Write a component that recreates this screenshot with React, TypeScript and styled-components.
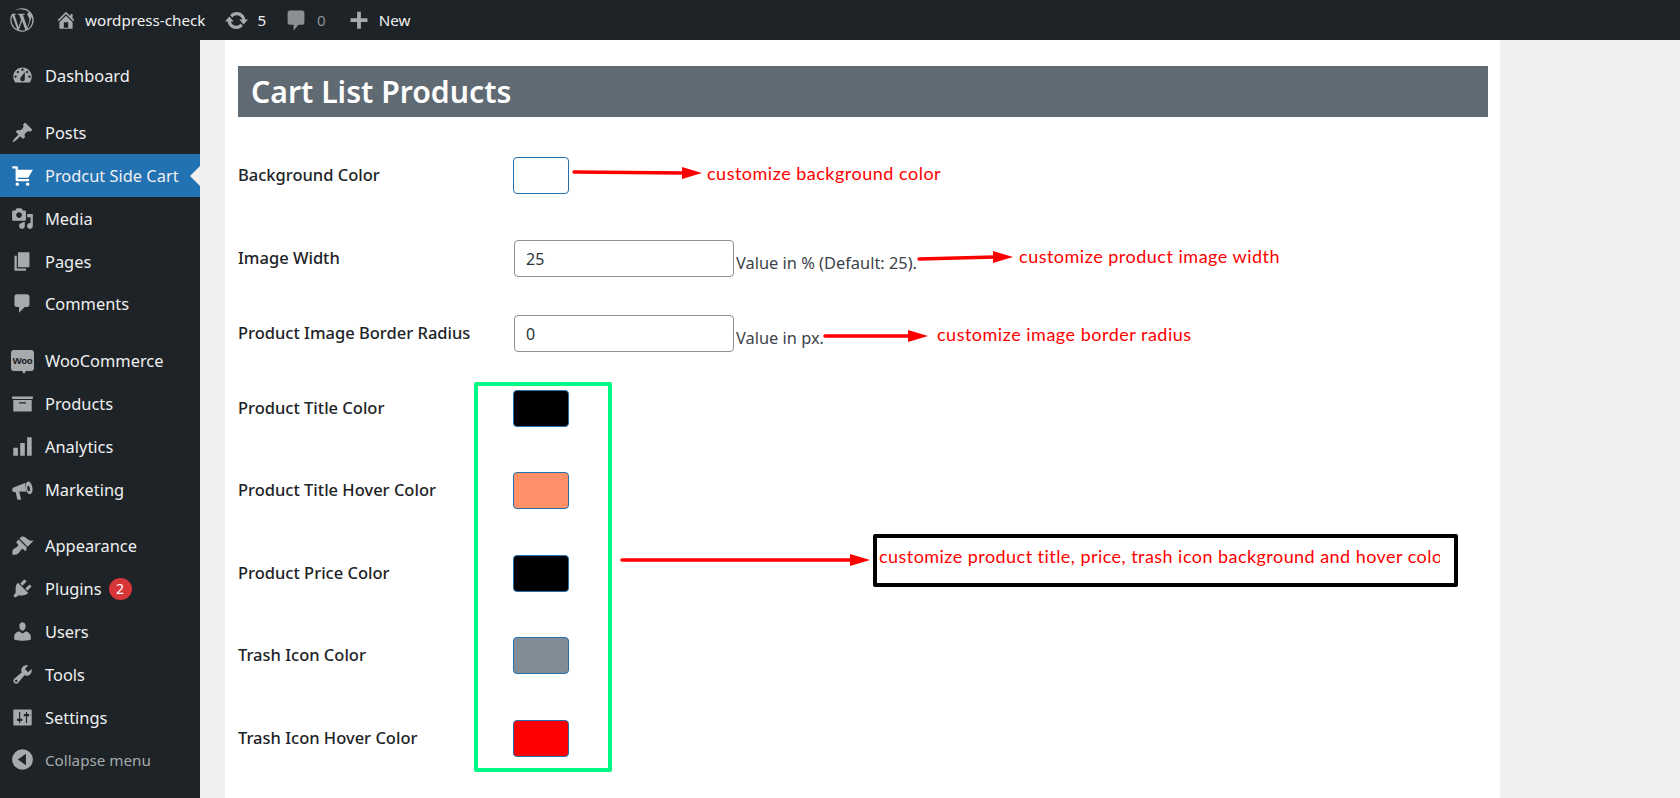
import React from "react";
import styled, { createGlobalStyle } from "styled-components";

const FONT = `"Noto Sans", "Open Sans", "Liberation Sans", sans-serif`;
const NOTE_FONT = `Lato, "Open Sans", sans-serif`;

const Global = createGlobalStyle`
  html, body { margin: 0; padding: 0; height: 100%; background: #f0f0f1; overflow: hidden; }
  #root { height: 100%; }
  * { box-sizing: border-box; }
`;

const Page = styled.div`
  width: 1680px; height: 798px; display: flex; flex-direction: column; position: relative; overflow: hidden;
  font-family: ${FONT}; background: #f0f0f1;
`;
const TopBar = styled.header`
  height: 40px; flex: none; background: #1d2327; display: flex; align-items: center; color: #f0f0f1; font-size: 15.2px;
`;
const TopItem = styled.div<{ $ml: number; $gap: number; $dim?: boolean }>`
  display: flex; align-items: center; margin-left: ${p => p.$ml}px; gap: ${p => p.$gap}px;
  color: ${p => (p.$dim ? "#8c8f94" : "#f0f0f1")};
`;
const Body = styled.div`flex: 1; display: flex; min-height: 0;`;
const Sidebar = styled.nav`
  width: 200px; flex: none; background: #1d2327; padding-top: 14.6px; display: flex; flex-direction: column; gap: 14px;
`;
const Group = styled.div`display: flex; flex-direction: column;`;
const Item = styled.div<{ $active?: boolean; $muted?: boolean }>`
  height: 42.8px; display: flex; align-items: center; padding-left: 11px; position: relative;
  background: ${p => (p.$active ? "#2271b1" : "transparent")};
  color: ${p => (p.$muted ? "#a7aaad" : "#f0f0f1")};
  font-size: ${p => (p.$muted ? "15.2px" : "16.4px")};
  ${p => p.$active && `&::after { content: ""; position: absolute; right: 0; top: 50%; margin-top: -10px;
    border: 10px solid transparent; border-left-width: 0; border-right-color: #f0f0f1; }`}
`;
const IconSlot = styled.span`width: 23px; height: 23px; display: flex; align-items: center; justify-content: center; margin-right: 11px; flex: none;`;
const WooMark = styled.span`
  width: 24px; height: 21px; border-radius: 3px; background: #a7aaad; color: #1d2327; font-size: 9.5px; font-weight: 700;
  display: flex; align-items: center; justify-content: center; position: relative; letter-spacing: -0.3px;
  &::after { content: ""; position: absolute; bottom: -3px; left: 11px; border: 2px solid transparent; border-top-color: #a7aaad; border-bottom-width: 0; border-top-width: 3px; }
`;
const Badge = styled.span`
  width: 23px; height: 22px; border-radius: 50%; background: #d63638; color: #fff; font-size: 14px; margin-left: 7px;
  display: flex; align-items: center; justify-content: center;
`;
const Main = styled.main`flex: 1; min-width: 0; padding-left: 25px;`;
const Panel = styled.section`width: 1275px; height: 100%; background: #fff; padding: 26px 12px 0 13px;`;
const Heading = styled.h1`
  margin: 0 0 40px; height: 51px; background: #5f6a73; color: #fff; font-size: 30.2px; font-weight: 600; line-height: 52px; padding-left: 13px;
`;
const Row = styled.div<{ $h: number }>`display: flex; align-items: flex-start; height: ${p => p.$h}px;`;
const Label = styled.label`
  width: 275px; flex: none; font-size: 16.5px; font-weight: 500; color: #1d2327; line-height: 36px;
`;
const Swatch = styled.div<{ $c: string }>`
  width: 56px; height: 37px; border: 1px solid #2271b1; border-radius: 4px; background: ${p => p.$c}; flex: none;
`;
const TextBox = styled.div`
  width: 220px; height: 37px; margin-left: 1px; border: 1px solid #8c8f94; border-radius: 4px; background: #fff; flex: none;
  padding-left: 11px; display: flex; align-items: center; font-size: 16px; color: #2c3338;
`;
const Help = styled.span`
  margin: 11px 0 0 2px; line-height: 24px; font-size: 16.4px; color: #3c434a; white-space: nowrap;
`;
const ArrowSvg = styled.svg<{ $t: number; $l: number }>`flex: none; margin: ${p => p.$t}px 0 0 ${p => p.$l}px; display: block;`;
const Note = styled.span<{ $t: number; $l: number }>`
  margin: ${p => p.$t}px 0 0 ${p => p.$l}px; font-family: ${NOTE_FONT}; color: #f00; font-size: 18px; line-height: 24px; white-space: nowrap; letter-spacing: 0.5px;
`;
const GreenBox = styled.div`
  position: absolute; left: 474px; top: 382px; width: 138px; height: 390px; border: 4px solid #00f985; border-radius: 2px;
`;
const BlackBox = styled.div`
  position: absolute; left: 873px; top: 534px; width: 585px; height: 53px; border: 4px solid #000; border-radius: 2px;
  padding: 6px 14px 0 2px; overflow: hidden;
`;
const BoxText = styled.div`
  overflow: hidden; white-space: nowrap; font-family: ${NOTE_FONT}; color: #f00; font-size: 18px; line-height: 24px; letter-spacing: 0.45px;
`;
const BigArrow = styled.svg`position: absolute; left: 620px; top: 552px; display: block;`;

const P = ({ d, s = 23, c = "#a7aaad" }: { d: string; s?: number; c?: string }) => (
  <svg width={s} height={s} viewBox="0 0 20 20" fill={c}><path fillRule="evenodd" d={d} /></svg>
);

const icons = {
  home: "M16 8.5l1.53 1.53-1.06 1.06L10 4.62l-6.47 6.47-1.06-1.06L10 2.5l4 4v-2h2v4zm-6-2.46l6 5.99V18H4v-5.97zM12 17v-5H8v5h4z",
  update: "M10.2 3.28c3.53 0 6.43 2.61 6.92 6h2.08l-3.5 4-3.5-4h2.32c-.45-1.97-2.21-3.45-4.32-3.45-1.45 0-2.73.71-3.54 1.78L4.95 5.66C6.23 4.2 8.11 3.28 10.2 3.28zm-.4 13.44c-3.52 0-6.43-2.61-6.92-6H.8l3.5-4c1.17 1.33 2.33 2.67 3.5 4H5.48c.45 1.97 2.21 3.45 4.32 3.45 1.45 0 2.73-.71 3.54-1.78l1.71 1.95c-1.28 1.46-3.15 2.38-5.25 2.38z",
  comment: "M5 2h10c1.1 0 2 .9 2 2v8c0 1.1-.9 2-2 2h-3l-4 5v-5H5c-1.1 0-2-.9-2-2V4c0-1.1.9-2 2-2z",
  plus: "M8.3 2.5h3.4v6h6v3.4h-6v6H8.3v-6h-6V8.5h6z",
  wp: "M10 1a9 9 0 1 0 0 18 9 9 0 0 0 0-18zm0 .9a8.1 8.1 0 0 1 5.5 2.1c-.8 0-1.4.7-1.4 1.5 0 .7.4 1.3.9 2 .3.6.7 1.4.7 2.5 0 .8-.3 1.7-.7 2.9l-.9 3-3.3-9.8c.5 0 1-.1 1-.1.5 0 .4-.8 0-.8 0 0-1.5.1-2.4.1-.9 0-2.4-.1-2.4-.1-.5 0-.5.8 0 .8 0 0 .4.1.9.1l1.4 3.7-1.9 5.8L4.2 6c.5 0 1-.1 1-.1.5 0 .4-.8 0-.8 0 0-1.4.1-2.3.1h-.5A8.1 8.1 0 0 1 10 1.9zM2.6 6.9L6.4 17.3A8.1 8.1 0 0 1 2.6 6.9zm14.6.1a8.1 8.1 0 0 1-3 10.1l2.5-7.2c.5-1.2.6-2.1.6-2.9zM10.1 10.7l2.5 6.9a8.1 8.1 0 0 1-5 .1z",
  dashboard: "M3.76 16h12.48c1.1-1.37 1.76-3.11 1.76-5 0-4.42-3.58-8-8-8s-8 3.58-8 8c0 1.89.66 3.63 1.76 5zM10 4c.55 0 1 .45 1 1s-.45 1-1 1-1-.45-1-1 .45-1 1-1zM6 6c.55 0 1 .45 1 1s-.45 1-1 1-1-.45-1-1 .45-1 1-1zm8 0c.55 0 1 .45 1 1s-.45 1-1 1-1-.45-1-1 .45-1 1-1zm-5.37 5.55L12 7v6c0 1.1-.9 2-2 2s-2-.9-2-2c0-.57.24-1.08.63-1.45zM4 10c.55 0 1 .45 1 1s-.45 1-1 1-1-.45-1-1 .45-1 1-1zm12 0c.55 0 1 .45 1 1s-.45 1-1 1-1-.45-1-1 .45-1 1-1z",
  post: "M10.44 3.02l1.82-1.82 6.36 6.35-1.83 1.82c-1.05-.68-2.48-.57-3.41.36l-.75.75c-.92.93-1.04 2.35-.35 3.41l-1.83 1.82-2.41-2.41-2.8 2.79c-.42.42-3.38 2.71-3.8 2.29s1.86-3.39 2.28-3.81l2.79-2.79L4.1 9.36l1.83-1.82c1.05.69 2.48.57 3.4-.36l.75-.75c.93-.92 1.05-2.35.36-3.41z",
  cart: "M6 13h9c.55 0 1 .45 1 1s-.45 1-1 1H5c-.55 0-1-.45-1-1V4H2c-.55 0-1-.45-1-1s.45-1 1-1h3c.55 0 1 .45 1 1v2h13l-4 7H6v1zm-.5 3c.83 0 1.5.67 1.5 1.5S6.33 19 5.5 19 4 18.33 4 17.5 4.67 16 5.5 16zm9 0c.83 0 1.5.67 1.5 1.5s-.67 1.5-1.5 1.5-1.5-.67-1.5-1.5.67-1.5 1.5-1.5z",
  media: "M13 11V4c0-.55-.45-1-1-1h-1.67L9 1H5L3.67 3H2c-.55 0-1 .45-1 1v7c0 .55.45 1 1 1h10c.55 0 1-.45 1-1zM7 4.5c1.38 0 2.5 1.12 2.5 2.5S8.38 9.5 7 9.5 4.5 8.38 4.5 7 5.62 4.5 7 4.5zM14 6h5v10.5c0 1.38-1.12 2.5-2.5 2.5S14 17.88 14 16.5s1.12-2.5 2.5-2.5c.17 0 .34.02.5.05V9h-3V6zm-4 8.05V13h2v3.5c0 1.38-1.12 2.5-2.5 2.5S7 17.88 7 16.5 8.12 14 9.5 14c.17 0 .34.02.5.05z",
  page: "M6 15V2h10v13H6zm-1 1h8v2H3V5h2v11z",
  comments: "M5 2h9c1.1 0 2 .9 2 2v7c0 1.1-.9 2-2 2h-2l-5 5v-5H5c-1.1 0-2-.9-2-2V4c0-1.1.9-2 2-2z",
  archive: "M19 4v2H1V4h18zM2 7h16v10H2V7zm11 3V9H7v1h6z",
  chart: "M2 11h4v7H2zM8 7h4v11H8zM14 2h4v16h-4z",
  megaphone: "M18.6 8.2c-.5-3-2.2-5.4-3.8-5.1-1.5.3-2.4 2.8-2 5.8.5 3 2.2 5.4 3.8 5.1 1.6-.3 2.5-2.8 2-5.8zM16.4 9c.2 1.4-.1 2.6-.7 2.7-.6.1-1.3-.9-1.5-2.3-.2-1.4.1-2.6.7-2.7.6-.1 1.3.9 1.5 2.3zM12.6 4.2L2.2 8.2c-1 .5-1.3 1.4-1.1 2.4.2 1 .9 1.7 2 1.7l.9-.1L5.6 19h3.2L7.2 11.8l7-.3c-1.7-1.9-2.4-4.9-1.6-7.3z",
  appearance: "M14.48 11.06L7.41 3.99l1.5-1.5c.5-.56 2.3-.47 3.51.32 1.21.8 1.43 1.28 2.91 2.1 1.18.64 2.45 1.26 4.45.85zm-.71.71L6.7 4.7 4.93 6.47c-.39.39-.39 1.02 0 1.41l1.06 1.06c.39.39.39 1.03 0 1.42-.6.6-1.43 1.11-2.21 1.69-.35.26-.7.53-1.01.84C1.43 13.23.91 15.07 1.23 17.5c.09.23.26.4.49.49 1.81.32 3.65-.2 4.99-1.54.31-.31.58-.66.84-1.01.58-.78 1.09-1.61 1.69-2.21.39-.39 1.03-.39 1.42 0l1.06 1.06c.39.39 1.02.39 1.41 0z",
  plugin: "M13.11 4.36L9.87 7.6 8 5.73l3.24-3.24c.35-.34 1.05-.2 1.56.32.52.51.66 1.21.31 1.55zm-8 1.77l.91-1.12 9.01 9.01-1.19.84c-.71.71-2.63 1.16-3.82 1.16H6.14L4.9 17.26c-.59.59-1.54.59-2.12 0-.59-.58-.59-1.53 0-2.12l1.24-1.24v-3.88c0-1.13.4-3.19 1.09-3.89zm7.26 3.97l3.24-3.24c.34-.35 1.04-.21 1.55.31.52.51.66 1.21.31 1.55l-3.24 3.25z",
  users: "M10 9.25c-2.27 0-2.73-3.44-2.73-3.44C7 4.02 7.82 2 9.97 2c2.16 0 2.98 2.02 2.71 3.81 0 0-.41 3.44-2.68 3.44zm0 2.57L12.72 10c2.39 0 4.52 2.33 4.52 4.53v2.49s-3.65 1.13-7.24 1.13c-3.65 0-7.24-1.13-7.24-1.13v-2.49c0-2.25 1.94-4.48 4.47-4.48z",
  tools: "M16.68 9.77c-1.34 1.34-3.3 1.67-4.95.99l-5.41 6.52c-.99.99-2.59.99-3.58 0s-.99-2.59 0-3.57l6.52-5.42c-.68-1.65-.35-3.61.99-4.95 1.28-1.28 3.12-1.62 4.72-1.06l-2.89 2.89 2.82 2.82 2.86-2.87c.53 1.58.18 3.39-1.08 4.65zM3.81 16.21c.4.39 1.04.39 1.43 0 .4-.4.4-1.04 0-1.43-.39-.4-1.03-.4-1.43 0-.39.39-.39 1.03 0 1.43z",
  settings: "M18 16V4c0-.55-.45-1-1-1H3c-.55 0-1 .45-1 1v12c0 .55.45 1 1 1h14c.55 0 1-.45 1-1zM8 11h1c.55 0 1 .45 1 1s-.45 1-1 1H8v1.5c0 .28-.22.5-.5.5s-.5-.22-.5-.5V13H6c-.55 0-1-.45-1-1s.45-1 1-1h1V5.5c0-.28.22-.5.5-.5s.5.22.5.5V11zm5-2h-1c-.55 0-1-.45-1-1s.45-1 1-1h1V5.5c0-.28.22-.5.5-.5s.5.22.5.5V7h1c.55 0 1 .45 1 1s-.45 1-1 1h-1v5.5c0 .28-.22.5-.5.5s-.5-.22-.5-.5V9z",
  collapse: "M10 1a9 9 0 1 0 0 18 9 9 0 0 0 0-18zm3 4v10L6 10z",
};

const Arrow = ({ w, rise = 0, t, l }: { w: number; rise?: number; t: number; l: number }) => (
  <ArrowSvg $t={t} $l={l} width={w} height={14} viewBox={`0 0 ${w} 14`}>
    <line x1={2} y1={7 - rise} x2={w - 18} y2={7} stroke="#f00" strokeWidth={3.4} strokeLinecap="round" />
    <polygon points={`${w - 20},1 ${w},7 ${w - 20},13`} fill="#f00" />
  </ArrowSvg>
);

const MenuItem = ({ icon, label, active, children }: { icon: keyof typeof icons; label: string; active?: boolean; children?: React.ReactNode }) => (
  <Item $active={active}>
    <IconSlot><P d={icons[icon]} c={active ? "#fff" : "#a7aaad"} /></IconSlot>
    {label}
    {children}
  </Item>
);

export default function App() {
  return (
    <Page>
      <Global />
      <TopBar>
        <TopItem $ml={9} $gap={0}><P d={icons.wp} s={26} /></TopItem>
        <TopItem $ml={20} $gap={8}><P d={icons.home} s={22} />wordpress-check</TopItem>
        <TopItem $ml={19} $gap={8}><P d={icons.update} s={25} />5</TopItem>
        <TopItem $ml={18} $gap={9} $dim><P d={icons.comment} s={24} c="#8c8f94" />0</TopItem>
        <TopItem $ml={22} $gap={9}><P d={icons.plus} s={22} c="#a7aaad" />New</TopItem>
      </TopBar>
      <Body>
        <Sidebar>
          <Group><MenuItem icon="dashboard" label="Dashboard" /></Group>
          <Group>
            <MenuItem icon="post" label="Posts" />
            <MenuItem icon="cart" label="Prodcut Side Cart" active />
            <MenuItem icon="media" label="Media" />
            <MenuItem icon="page" label="Pages" />
            <MenuItem icon="comments" label="Comments" />
          </Group>
          <Group>
            <Item><IconSlot><WooMark>Woo</WooMark></IconSlot>WooCommerce</Item>
            <MenuItem icon="archive" label="Products" />
            <MenuItem icon="chart" label="Analytics" />
            <MenuItem icon="megaphone" label="Marketing" />
          </Group>
          <Group>
            <MenuItem icon="appearance" label="Appearance" />
            <MenuItem icon="plugin" label="Plugins"><Badge>2</Badge></MenuItem>
            <MenuItem icon="users" label="Users" />
            <MenuItem icon="tools" label="Tools" />
            <MenuItem icon="settings" label="Settings" />
            <Item $muted><IconSlot><P d={icons.collapse} /></IconSlot>Collapse menu</Item>
          </Group>
        </Sidebar>
        <Main>
          <Panel>
            <Heading>Cart List Products</Heading>
            <Row $h={83}>
              <Label>Background Color</Label>
              <Swatch $c="#fff" />
              <Arrow w={130} rise={1} t={9} l={3} />
              <Note $t={4} $l={5}>customize background color</Note>
            </Row>
            <Row $h={75}>
              <Label>Image Width</Label>
              <TextBox>25</TextBox>
              <Help>Value in % (Default: 25).</Help>
              <Arrow w={96} rise={-2} t={10} l={0} />
              <Note $t={4} $l={6}>customize product image width</Note>
            </Row>
            <Row $h={75}>
              <Label>Product Image Border Radius</Label>
              <TextBox>0</TextBox>
              <Help>Value in px.</Help>
              <Arrow w={105} t={14} l={-1} />
              <Note $t={7} $l={9}>customize image border radius</Note>
            </Row>
            <Row $h={82.4}><Label>Product Title Color</Label><Swatch $c="#000" /></Row>
            <Row $h={82.4}><Label>Product Title Hover Color</Label><Swatch $c="#ff9067" /></Row>
            <Row $h={82.4}><Label>Product Price Color</Label><Swatch $c="#000" /></Row>
            <Row $h={82.4}><Label>Trash Icon Color</Label><Swatch $c="#828c97" /></Row>
            <Row $h={82.4}><Label>Trash Icon Hover Color</Label><Swatch $c="#f00" /></Row>
          </Panel>
        </Main>
      </Body>
      <GreenBox />
      <BigArrow width={250} height={16} viewBox="0 0 250 16">
        <line x1={2} y1={8} x2={232} y2={8} stroke="#f00" strokeWidth={3.4} strokeLinecap="round" />
        <polygon points="230,2 250,8 230,14" fill="#f00" />
      </BigArrow>
      <BlackBox>
        <BoxText>customize product title, price, trash icon background and hover color</BoxText>
      </BlackBox>
    </Page>
  );
}
